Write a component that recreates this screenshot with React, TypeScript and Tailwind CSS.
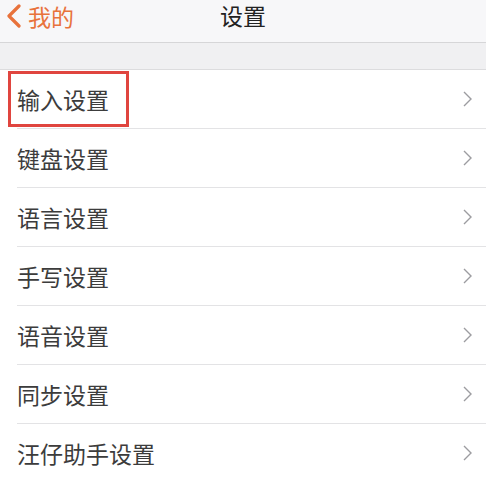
const items = [
  "输入设置",
  "键盘设置",
  "语言设置",
  "手写设置",
  "语音设置",
  "同步设置",
  "汪仔助手设置",
];

const font = { fontFamily: '"Noto Sans CJK SC", "Noto Sans", sans-serif' };

const Chevron = () => (
  <svg width="9" height="16" viewBox="0 0 9 16" fill="none">
    <path d="M1 1l7 7-7 7" stroke="#9c9ca0" strokeWidth="1.4" />
  </svg>
);

export default function App() {
  return (
    <div className="w-[486px] h-[479px] overflow-hidden bg-white" style={font}>
      <div className="relative h-[43px] flex items-start justify-center pt-[2px] bg-[#f7f7f9] border-b border-[#d6d6d8]">
        <div className="absolute left-[6px] top-[3px] flex items-center gap-[6px] text-[#e8723c]">
          <svg width="16" height="24" viewBox="0 0 16 24" fill="none">
            <path d="M13 2L3 12l10 10" stroke="#e8723c" strokeWidth="3.2" strokeLinecap="round" strokeLinejoin="round" />
          </svg>
          <span className="text-[23px] leading-[26px]">我的</span>
        </div>
        <span className="text-[23px] leading-[26px] text-[#222]">设置</span>
      </div>
      <div className="h-[27px] bg-[#f0f0f2] border-b border-[#dcdcde]" />
      <div className="flex flex-col">
        {items.map((t, i) => (
          <div key={t} className="relative h-[59px] pl-[17px] flex">
            <div className="flex-1 flex items-center justify-between pr-[14px] border-b border-[#e3e3e5]">
              <span className="text-[23px] leading-none text-[#3c3c3c]">{t}</span>
              <Chevron />
            </div>
            {i === 0 && (
              <div className="absolute left-[8px] top-[1px] w-[121px] h-[56px] border-[3px] border-[#e0453f]" />
            )}
          </div>
        ))}
      </div>
    </div>
  );
}
